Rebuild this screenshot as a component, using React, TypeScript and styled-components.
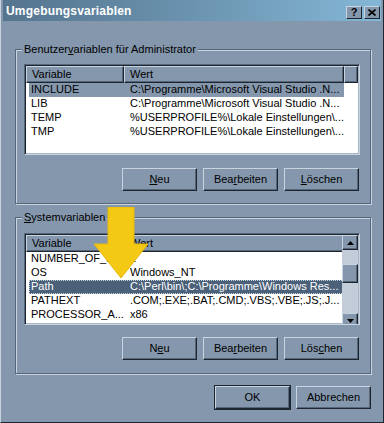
import React from 'react';
import styled, { createGlobalStyle } from 'styled-components';

const GlobalStyle = createGlobalStyle`
  body {
    margin: 0;
    background: #8497ad;
    font-family: 'Liberation Sans', Arial, sans-serif;
    font-size: 11px;
    color: #000;
  }
`;

const FACE = '#8497ad';
const LIGHT = '#c8d4e0';
const DARK = '#1d2530';
const MID = '#56677c';

const Window = styled.div`
  position: relative;
  width: 384px;
  height: 423px;
  box-sizing: border-box;
  background: ${FACE};
  border: 1px solid;
  border-top: 0;
  border-color: ${LIGHT} ${DARK} ${DARK} ${LIGHT};
  padding: 0 2px 2px 2px;
  display: flex;
  flex-direction: column;
  overflow: hidden;
`;

const TitleBar = styled.div`
  height: 21px;
  display: flex;
  align-items: center;
  justify-content: space-between;
  padding: 1px 1px 0 3px;
  box-sizing: border-box;
  background: linear-gradient(to right, #55748e, #6d97b3 55%, #84b7d6);
`;

const Title = styled.span`
  color: #fff;
  font-weight: bold;
  font-size: 12px;
  letter-spacing: 0.2px;
`;

const TitleButtons = styled.div`
  display: flex;
  gap: 2px;
  align-self: flex-end;
  margin-bottom: 2px;
`;

const TitleButton = styled.div`
  width: 16px;
  height: 13px;
  box-sizing: border-box;
  background: ${FACE};
  border: 1px solid;
  border-color: ${LIGHT} ${DARK} ${DARK} ${LIGHT};
  display: flex;
  align-items: center;
  justify-content: center;
  font-weight: bold;
  font-size: 11px;
  line-height: 1;
`;

const Body = styled.div`
  display: flex;
  flex-direction: column;
  padding: 28px 10px 0 12px;
`;

const Group = styled.div<{ $height: number; $top?: number }>`
  position: relative;
  height: ${({ $height }) => $height}px;
  margin-top: ${({ $top }) => $top ?? 0}px;
  box-sizing: border-box;
  border: 1px solid ${MID};
  box-shadow: inset 1px 1px 0 ${LIGHT}, 1px 1px 0 ${LIGHT};
  display: flex;
  flex-direction: column;
  padding: ${({ $top }) => ($top ? 15 : 14)}px 10px 0 8px;
`;

const GroupLabel = styled.span`
  position: absolute;
  top: -8px;
  left: 6px;
  padding: 0 2px;
  background: ${FACE};
  line-height: 14px;
`;

const List = styled.div<{ $height: number }>`
  height: ${({ $height }) => $height}px;
  box-sizing: border-box;
  border: 1px solid;
  border-color: ${MID} ${LIGHT} ${LIGHT} ${MID};
  box-shadow: inset 1px 1px 0 ${DARK}, inset -1px -1px 0 #a8b6c6;
  background: #fff;
  display: flex;
  overflow: hidden;
  padding: 1px;
`;

const ListMain = styled.div`
  flex: 1;
  display: flex;
  flex-direction: column;
  overflow: hidden;
`;

const Header = styled.div`
  display: flex;
  height: 17px;
  flex-shrink: 0;
  background: ${FACE};
`;

const HeaderCell = styled.div<{ $width?: number }>`
  width: ${({ $width }) => ($width ? `${$width}px` : 'auto')};
  flex: ${({ $width }) => ($width ? 'none' : '1')};
  box-sizing: border-box;
  border: 1px solid;
  border-color: ${LIGHT} ${DARK} ${DARK} ${LIGHT};
  box-shadow: inset -1px -1px 0 ${MID};
  padding: 1px 0 0 5px;
  line-height: 13px;
  white-space: nowrap;
  overflow: hidden;
`;

const Row = styled.div<{ $state?: 'focus' | 'grey' }>`
  display: flex;
  height: 14px;
  flex-shrink: 0;
  margin-left: 3px;
  width: 315px;
  box-sizing: border-box;
  line-height: 13px;
  background: ${({ $state }) => ($state === 'focus' ? '#4b6079' : $state === 'grey' ? FACE : 'transparent')};
  color: ${({ $state }) => ($state === 'focus' ? '#fff' : '#000')};
  outline: ${({ $state }) => ($state === 'focus' ? '1px dotted #c8d4e0' : 'none')};
  outline-offset: -1px;
`;

const Cell = styled.div<{ $width: number; $pad?: number }>`
  width: ${({ $width }) => $width}px;
  flex: none;
  padding-left: ${({ $pad }) => $pad ?? 2}px;
  box-sizing: border-box;
  white-space: nowrap;
  overflow: hidden;
`;

const ScrollBar = styled.div`
  width: 16px;
  flex: none;
  display: flex;
  flex-direction: column;
  background: #c3cdd9;
`;

const ScrollButton = styled.div<{ $grow?: number }>`
  height: ${({ $grow }) => $grow ?? 15}px;
  flex: none;
  box-sizing: border-box;
  background: ${FACE};
  border: 1px solid;
  border-color: ${LIGHT} ${DARK} ${DARK} ${LIGHT};
  box-shadow: inset -1px -1px 0 ${MID};
  display: flex;
  align-items: center;
  justify-content: center;
`;

const Track = styled.div<{ $height: number }>`
  height: ${({ $height }) => $height}px;
  flex: none;
`;

const ButtonRow = styled.div<{ $top: number }>`
  display: flex;
  justify-content: flex-end;
  gap: 6px;
  margin-top: ${({ $top }) => $top}px;
  padding-right: 1px;
`;

const Button = styled.div<{ $default?: boolean }>`
  width: 75px;
  height: 23px;
  box-sizing: border-box;
  background: ${FACE};
  border: 1px solid;
  border-color: ${LIGHT} ${DARK} ${DARK} ${LIGHT};
  box-shadow: inset -1px -1px 0 ${MID};
  outline: ${({ $default }) => ($default ? `1px solid ${DARK}` : 'none')};
  display: flex;
  align-items: center;
  justify-content: center;
  line-height: 1;
`;

const Footer = styled.div`
  display: flex;
  justify-content: flex-end;
  gap: 6px;
  margin-top: 12px;
`;

const Arrow = styled.svg`
  position: absolute;
  left: 92px;
  top: 207px;
`;

type Item = { name: string; value: string; state?: 'focus' | 'grey' };

const userVars: Item[] = [
  { name: 'INCLUDE', value: 'C:\\Programme\\Microsoft Visual Studio .N...', state: 'grey' },
  { name: 'LIB', value: 'C:\\Programme\\Microsoft Visual Studio .N...' },
  { name: 'TEMP', value: '%USERPROFILE%\\Lokale Einstellungen\\...' },
  { name: 'TMP', value: '%USERPROFILE%\\Lokale Einstellungen\\...' },
];

const sysVars: Item[] = [
  { name: 'NUMBER_OF_P...', value: '1' },
  { name: 'OS', value: 'Windows_NT' },
  { name: 'Path', value: 'C:\\Perl\\bin\\;C:\\Programme\\Windows Res...', state: 'focus' },
  { name: 'PATHEXT', value: '.COM;.EXE;.BAT;.CMD;.VBS;.VBE;.JS;.J...' },
  { name: 'PROCESSOR_A...', value: 'x86' },
];

const Tri = ({ up }: { up?: boolean }) => (
  <svg width="7" height="4" viewBox="0 0 7 4">
    <polygon points={up ? '3.5,0 7,4 0,4' : '0,0 7,0 3.5,4'} fill="#000" />
  </svg>
);

const VarList = ({ items, height, scroll }: { items: Item[]; height: number; scroll?: boolean }) => (
  <List $height={height}>
    <ListMain>
      <Header>
        <HeaderCell $width={98}>Variable</HeaderCell>
        <HeaderCell $width={220}>Wert</HeaderCell>
        {!scroll && <HeaderCell />}
      </Header>
      {items.map((item) => (
        <Row key={item.name} $state={item.state}>
          <Cell $width={98}>{item.name}</Cell>
          <Cell $width={217} $pad={3}>
            {item.value}
          </Cell>
        </Row>
      ))}
    </ListMain>
    {scroll && (
      <ScrollBar>
        <ScrollButton>
          <Tri up />
        </ScrollButton>
        <Track $height={14} />
        <ScrollButton $grow={19} />
        <Track $height={30} />
        <ScrollButton>
          <Tri />
        </ScrollButton>
      </ScrollBar>
    )}
  </List>
);

export default function App() {
  return (
    <>
      <GlobalStyle />
      <Window>
        <TitleBar>
          <Title>Umgebungsvariablen</Title>
          <TitleButtons>
            <TitleButton>?</TitleButton>
            <TitleButton>
              <svg width="8" height="7" viewBox="0 0 8 7">
                <path d="M0.5 0.5 L7.5 6.5 M7.5 0.5 L0.5 6.5" stroke="#000" strokeWidth="1.6" />
              </svg>
            </TitleButton>
          </TitleButtons>
        </TitleBar>
        <Body>
          <Group $height={155}>
            <GroupLabel>
              Benutzer<u>v</u>ariablen für Administrator
            </GroupLabel>
            <VarList items={userVars} height={91} />
            <ButtonRow $top={13}>
              <Button>
                <span>
                  <u>N</u>eu
                </span>
              </Button>
              <Button>
                <span>
                  Bea<u>r</u>beiten
                </span>
              </Button>
              <Button>
                <span>
                  <u>L</u>öschen
                </span>
              </Button>
            </ButtonRow>
          </Group>
          <Group $height={157} $top={13}>
            <GroupLabel>
              <u>S</u>ystemvariablen
            </GroupLabel>
            <VarList items={sysVars} height={92} scroll />
            <ButtonRow $top={12}>
              <Button>
                <span>
                  N<u>e</u>u
                </span>
              </Button>
              <Button>
                <span>
                  Bea<u>r</u>beiten
                </span>
              </Button>
              <Button>
                <span>
                  Lös<u>c</u>hen
                </span>
              </Button>
            </ButtonRow>
          </Group>
          <Footer>
            <Button $default>OK</Button>
            <Button>Abbrechen</Button>
          </Footer>
        </Body>
        <Arrow width="56" height="72" viewBox="0 0 56 72">
          <polygon points="15,0 41,0 41,37 55,37 28,71 1,37 15,37" fill="#f3c913" stroke="#e8b80c" strokeWidth="1" />
        </Arrow>
      </Window>
    </>
  );
}
